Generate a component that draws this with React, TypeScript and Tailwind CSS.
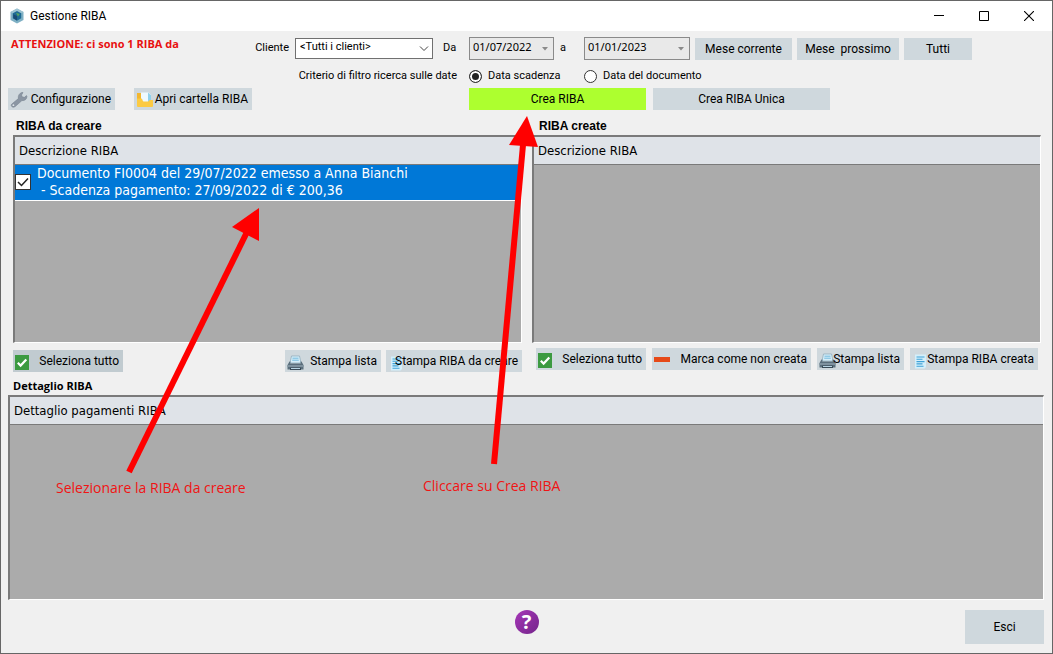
import { useState } from "react";
import type { ReactNode } from "react";
import clsx from "clsx";

interface PaymentRow {
  id: string;
  lines: string[];
}

const rowsToCreate: PaymentRow[] = [
  {
    id: "FI0004",
    lines: [
      "Documento FI0004 del 29/07/2022 emesso a Anna Bianchi",
      " - Scadenza pagamento: 27/09/2022 di € 200,36",
    ],
  },
];

function AppIcon() {
  return (
    <svg viewBox="0 0 16 16" className="size-4">
      <path d="M8 0.5 14.5 4v8L8 15.5 1.5 12V4z" fill="#7fb0c4" />
      <path d="M8 0.5 14.5 4 8 7.6 1.5 4z" fill="#9cc3d2" />
      <path d="M8 3 12.2 5.3v5L8 12.8 3.8 10.3v-5z" fill="#1d6a94" />
      <path d="M4.2 6.2 8 8v4.4L4.4 10.2z" fill="#174a74" />
      <path d="M7 4.8 10.8 6 9 8.4z" fill="#58a55c" />
    </svg>
  );
}

function WrenchIcon() {
  return (
    <svg viewBox="0 0 18 18" className="size-[18px] shrink-0">
      <path
        d="M1.6 14.2 8.4 8.6C7.8 6 9.2 3.2 12 2.4l1 .2-1.5 2.4.8 2 2.2.3 2-1.7.4.7c.1 2.8-2.2 4.7-5 4.3l-6.8 6C2.8 18.2.2 16 1.6 14.2z"
        fill="#8b96a3"
        stroke="#76828f"
        strokeWidth="0.6"
      />
      <circle cx="3.4" cy="15.2" r="0.9" fill="#dfe5e9" />
    </svg>
  );
}

function FolderIcon() {
  return (
    <svg viewBox="0 0 18 18" className="size-[18px] shrink-0">
      <path d="M1 3h4.5L7 5v11H2a1 1 0 0 1-1-1z" fill="#f3b62f" />
      <path d="M5 2.5h7.5L15 5v9H5z" fill="#eef9fe" />
      <path d="M12 2.5 15 5.2v7h-3z" fill="#8fd0ea" />
      <path d="M1 8.5h4.5c1 0 1 3 2 3H12c1 0 1-1.5 2-1.5h3V16a1 1 0 0 1-1 1H2a1 1 0 0 1-1-1z" fill="#fcca42" />
    </svg>
  );
}

function CheckIcon() {
  return (
    <svg viewBox="0 0 14 15" className="mt-0.5 h-[15px] w-3.5 shrink-0">
      <rect width="14" height="15" fill="#3c9a41" />
      <path d="M2.8 7.8 5.6 10.6 11.3 4.6" fill="none" stroke="#fff" strokeWidth="2.2" />
    </svg>
  );
}

function PrinterIcon() {
  return (
    <svg viewBox="0 0 17 16" className="mt-1 h-4 w-[17px] shrink-0">
      <path d="M4.5 1h8l1.5 7H3z" fill="#d5edf8" stroke="#7e9db0" strokeWidth="0.6" />
      <path d="M5.5 3.2h6M5.2 5.2h6.6" stroke="#69b5db" strokeWidth="0.9" />
      <path d="M2.5 6.5h1l-.3 2h10.6l-.3-2h1L16.5 10v4.5h-16V10z" fill="#5b6f7d" />
      <path d="M.5 10h16v2H.5z" fill="#7f929f" />
      <path d="M3 12.6h11V15H3z" fill="#394a56" />
      <path d="M4 13h9v1H4z" fill="#b8d4e3" />
    </svg>
  );
}

function DocumentIcon() {
  return (
    <svg viewBox="0 0 13 15" className="mt-1 ml-0.5 h-[15px] w-[13px] shrink-0">
      <path d="M1 .5h11v12.5L10.5 14.5H1z" fill="#d3effb" />
      <path d="M2.5 3h8M2.5 5.3h6M2.5 7.6h8M2.5 9.9h6M2.5 12.2h7" stroke="#3fa2d8" strokeWidth="1.1" />
    </svg>
  );
}

function MinusIcon() {
  return (
    <svg viewBox="0 0 16 5" className="h-[5px] w-4 shrink-0">
      <rect width="16" height="5" fill="#e64a19" />
    </svg>
  );
}

function Arrows() {
  return (
    <svg className="pointer-events-none absolute inset-0 size-full">
      <g fill="#f00" stroke="#f00">
        <path d="M128 471 246 231" strokeWidth="6" fill="none" />
        <path d="M258 207 231 226 258 240z" stroke="none" />
        <path d="M493 463 522 144" strokeWidth="6" fill="none" />
        <path d="M526 115 508 144 537 146z" stroke="none" />
      </g>
    </svg>
  );
}

function ActionButton({
  icon,
  className,
  children,
}: {
  icon?: ReactNode;
  className?: string;
  children: ReactNode;
}) {
  return (
    <button
      type="button"
      className={clsx(
        "flex h-[22px] shrink-0 items-center whitespace-nowrap text-xs",
        icon ? "justify-between pr-1 pl-0.5" : "justify-center",
        className ?? "",
      )}
    >
      {/* the icon takes no width, a long caption runs over it */}
      {icon && <span className="flex w-0">{icon}</span>}
      <span className="relative">{children}</span>
    </button>
  );
}

function DateField({ label, value, className }: { label: string; value: string; className: string }) {
  return (
    <div className={clsx("relative h-[23px]", className)}>
      <input
        type="text"
        aria-label={label}
        defaultValue={value}
        className="size-full border border-[#8a8a8a] bg-[#e9e9e9] pr-4 pb-1 pl-[3px] font-['Noto_Sans',sans-serif] text-[11px] outline-none"
      />
      <svg viewBox="0 0 6 4" className="absolute top-2.5 right-1.5 h-1 w-1.5">
        <path d="M0 0h6L3 3.5z" fill="#8a8a8a" />
      </svg>
    </div>
  );
}

function GridPanel({
  title,
  rows = [],
  className,
}: {
  title: string;
  rows?: PaymentRow[];
  className?: string;
}) {
  const [checked, setChecked] = useState(true);

  return (
    <div
      className={clsx(
        "border-t-2 border-r border-b border-l-2 border-t-[#7a7a7a] border-r-white border-b-white border-l-[#7a7a7a] bg-[#ababab]",
        className,
      )}
    >
      <table className="w-full border-collapse text-left font-['DejaVu_Sans_Condensed','Noto_Sans',sans-serif] leading-[17px]">
        <thead>
          <tr className="h-[27px] border-b border-[#7a7a7a] bg-[#dfe3e8] text-[13px]">
            <th className="px-1 font-normal">{title}</th>
          </tr>
        </thead>
        <tbody>
          {rows.map((row) => (
            <tr key={row.id} className="h-9 border-b border-white bg-[#0078d7] text-sm leading-[17px] text-white">
              <td>
                <label className="flex items-center gap-1.5">
                  <span className="relative size-4">
                    <input
                      type="checkbox"
                      checked={checked}
                      onChange={(e) => setChecked(e.target.checked)}
                      className="block size-4 appearance-none border border-[#333] bg-white"
                    />
                    {checked && (
                      <svg viewBox="0 0 16 16" className="pointer-events-none absolute inset-0">
                        <path d="M3 8 6.5 11.5 13 4.5" fill="none" stroke="#222" strokeWidth="1.5" />
                      </svg>
                    )}
                  </span>
                  <span className="whitespace-pre">{row.lines.join("\n")}</span>
                </label>
              </td>
            </tr>
          ))}
        </tbody>
      </table>
    </div>
  );
}

export default function App() {
  const [dateFilter, setDateFilter] = useState("scadenza");
  const radio =
    "size-[13px] appearance-none rounded-full border border-[#333] bg-white checked:bg-[#222] checked:shadow-[inset_0_0_0_2px_#fff]";

  return (
    <div className="relative flex min-h-screen flex-col border border-[#666] bg-[#f0f0f0] font-['Roboto','Noto_Sans',sans-serif] text-black">
      <header className="flex h-[30px] items-center bg-white pl-2 text-xs">
        <AppIcon />
        <h1 className="ml-[5px]">Gestione RIBA</h1>
        <div className="ml-auto flex">
          <button type="button" aria-label="Riduci a icona" className="flex h-[30px] w-[45px] items-center justify-center">
            <svg viewBox="0 0 10 10" className="size-2.5">
              <path d="M0 4.5h10" stroke="#000" />
            </svg>
          </button>
          <button type="button" aria-label="Ingrandisci" className="flex h-[30px] w-[45px] items-center justify-center">
            <svg viewBox="0 0 10 10" className="size-2.5">
              <path d="M.5.5h9v9h-9z" fill="none" stroke="#000" />
            </svg>
          </button>
          <button type="button" aria-label="Chiudi" className="flex h-[30px] w-[46px] items-center justify-center">
            <svg viewBox="0 0 10 10" className="size-2.5">
              <path d="m0 0 10 10M10 0 0 10" stroke="#000" strokeWidth="1.1" />
            </svg>
          </button>
        </div>
      </header>

      <section className="grid grid-cols-[461px_115px_1fr] pt-1.5 pl-[7px] text-[11px]">
        <div className="flex h-[23px] items-center">
          <p className="ml-[3px] self-start font-['Open_Sans',sans-serif] text-[11px] leading-[14px] font-bold text-[#e81010]">
            ATTENZIONE: ci sono 1 RIBA da
          </p>
          <label htmlFor="cliente" className="mr-1.5 ml-auto">
            Cliente
          </label>
          <div className="relative h-[21px] w-[138px]">
            <select
              id="cliente"
              className="size-full appearance-none border border-[#707070] bg-white pb-0.5 pl-1 text-[11px] outline-none"
            >
              <option>&lt;Tutti i clienti&gt;</option>
            </select>
            <svg viewBox="0 0 10 6" className="pointer-events-none absolute top-2 right-1 h-1.5 w-2.5">
              <path d="m1 .5 4 4 4-4" fill="none" stroke="#444" />
            </svg>
          </div>
          <span className="w-9 pl-2.5">Da</span>
        </div>
        <div className="flex items-center gap-1.5">
          <DateField label="Da" value="01/07/2022" className="w-[85px]" />
          <span>a</span>
        </div>
        <div className="flex items-center gap-[5px]">
          <DateField label="a" value="01/01/2023" className="w-[106px]" />
          <ActionButton className="w-[97px] bg-[#cfd8dd]">Mese corrente</ActionButton>
          <ActionButton className="w-[102px] bg-[#cfd8dd] whitespace-pre">{"Mese  prossimo"}</ActionButton>
          <ActionButton className="w-[68px] bg-[#cfd8dd]">Tutti</ActionButton>
        </div>

        <span className="flex h-[28px] items-center justify-end pt-1 pr-3">Criterio di filtro ricerca sulle date</span>
        <label className="flex items-center gap-1.5 pt-1 whitespace-nowrap">
          <input
            type="radio"
            name="data"
            checked={dateFilter === "scadenza"}
            onChange={() => setDateFilter("scadenza")}
            className={radio}
          />
          Data scadenza
        </label>
        <label className="flex items-center gap-1.5 pt-1">
          <input
            type="radio"
            name="data"
            checked={dateFilter === "documento"}
            onChange={() => setDateFilter("documento")}
            className={radio}
          />
          Data del documento
        </label>

        <div className="flex gap-[19px]">
          <ActionButton icon={<WrenchIcon />} className="w-[107px] bg-[#cfd8dd]">
            Configurazione
          </ActionButton>
          <ActionButton icon={<FolderIcon />} className="w-[118px] bg-[#cfd8dd]">
            Apri cartella RIBA
          </ActionButton>
        </div>
        <div className="col-span-2 flex gap-[7px]">
          <ActionButton className="w-[177px] bg-[#adff2f]">Crea RIBA</ActionButton>
          <ActionButton className="w-[177px] bg-[#cfd8dd]">Crea RIBA Unica</ActionButton>
        </div>
      </section>

      <main className="flex flex-1 flex-col">
        <div className="flex gap-2.5 pt-2 pr-[11px] pl-3">
          <section className="min-w-0 flex-1">
            <h2 className="h-[17px] pl-[3px] font-['Liberation_Sans',sans-serif] text-xs leading-4 font-bold">
              RIBA da creare
            </h2>
            <GridPanel title="Descrizione RIBA" rows={rowsToCreate} className="h-[208px]" />
            <div className="mt-[7px] flex gap-[5px]">
              <ActionButton icon={<CheckIcon />} className="mr-auto w-[110px] bg-[#c1cbd0]">
                Seleziona tutto
              </ActionButton>
              <ActionButton icon={<PrinterIcon />} className="w-24 bg-[#cfd8dd]">
                Stampa lista
              </ActionButton>
              <ActionButton icon={<DocumentIcon />} className="w-[136px] bg-[#cfd8dd]">
                Stampa RIBA da creare
              </ActionButton>
            </div>
          </section>
          <section className="min-w-0 flex-1">
            <h2 className="h-[17px] pl-[7px] font-['Liberation_Sans',sans-serif] text-xs leading-4 font-bold">
              RIBA create
            </h2>
            <GridPanel title="Descrizione RIBA" className="h-[208px]" />
            <div className="mt-[5px] flex gap-1.5 pl-1">
              <ActionButton icon={<CheckIcon />} className="w-[110px] bg-[#cfd8dd]">
                Seleziona tutto
              </ActionButton>
              <ActionButton icon={<MinusIcon />} className="w-[159px] bg-[#cfd8dd]">
                Marca come non creata
              </ActionButton>
              <ActionButton icon={<PrinterIcon />} className="w-[87px] bg-[#cfd8dd]">
                Stampa lista
              </ActionButton>
              <ActionButton icon={<DocumentIcon />} className="w-32 bg-[#cfd8dd]">
                Stampa RIBA creata
              </ActionButton>
            </div>
          </section>
        </div>

        <section className="flex flex-1 flex-col pt-1.5 pr-2 pl-[7px]">
          <h2 className="h-[17px] pl-[5px] font-['Open_Sans',sans-serif] text-[11px] leading-4 font-bold">
            Dettaglio RIBA
          </h2>
          <GridPanel title="Dettaglio pagamenti RIBA" className="flex-1" />
        </section>
      </main>

      <footer className="relative flex h-[53px] items-start justify-center pt-2.5">
        <button type="button" aria-label="Aiuto" className="size-6 rounded-full bg-linear-to-br from-[#a637b8] to-[#74248a] font-['Noto_Sans',sans-serif] text-xl leading-6 font-bold text-white">
          ?
        </button>
        <button type="button" className="absolute top-2.5 right-2 h-[34px] w-[79px] bg-[#cfd8dd] text-xs">
          Esci
        </button>
      </footer>

      <Arrows />
      <p className="absolute top-[477px] left-[55px] font-['Open_Sans',sans-serif] text-sm leading-5 text-[#f01414]">
        Selezionare la RIBA da creare
      </p>
      <p className="absolute top-[475px] left-[422px] font-['Open_Sans',sans-serif] text-sm leading-5 text-[#f01414]">
        Cliccare su Crea RIBA
      </p>
    </div>
  );
}
